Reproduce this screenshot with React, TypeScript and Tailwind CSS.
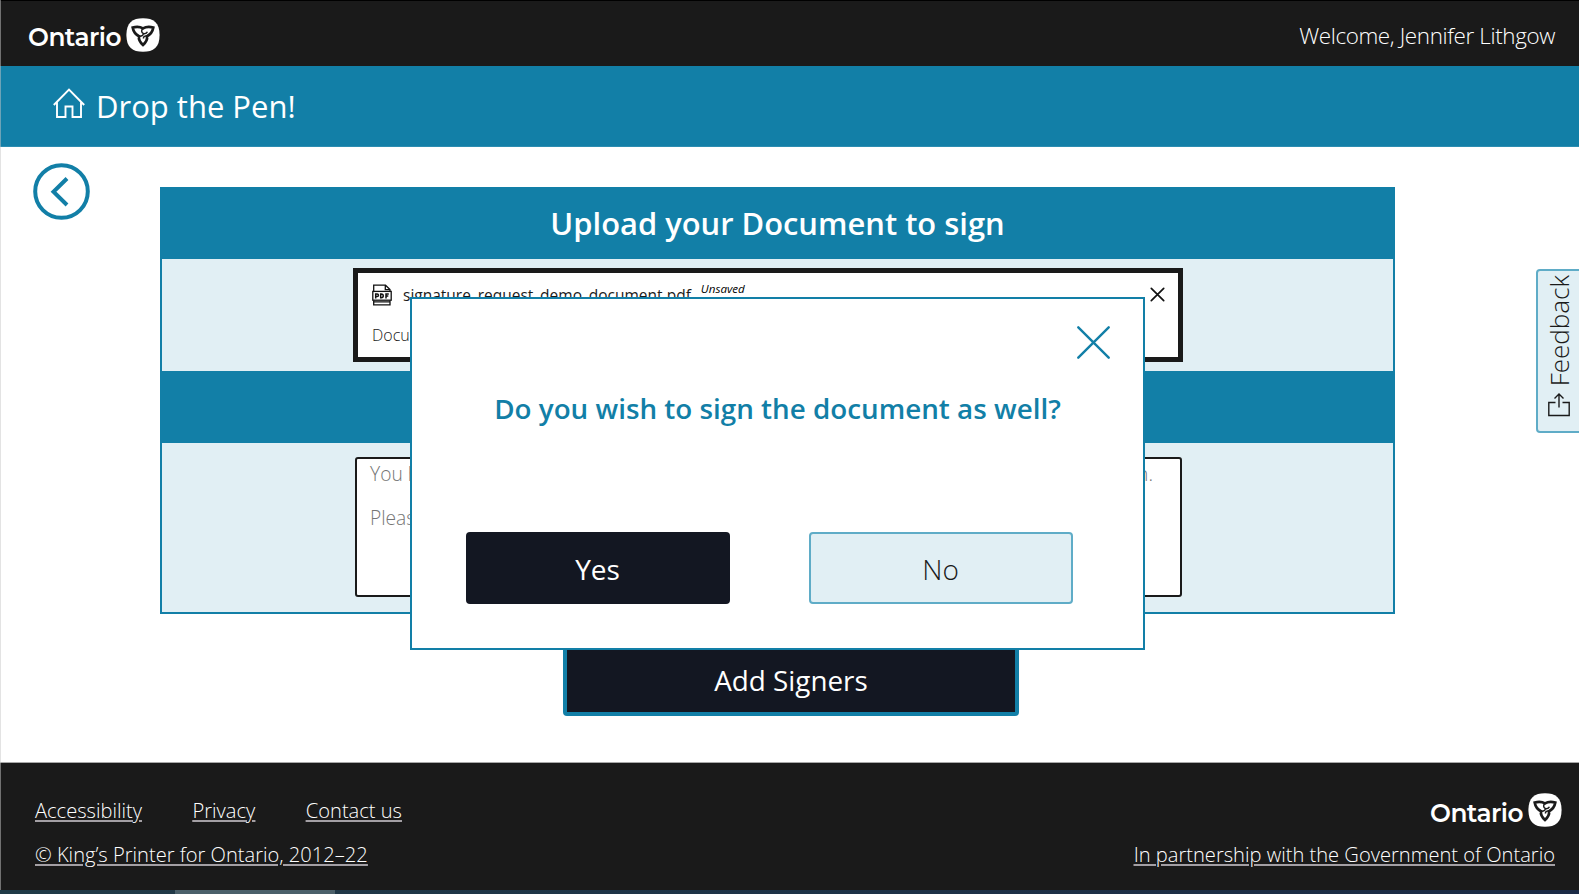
import React from 'react';

function Trillium() {
  return (
    <svg width="34" height="34" viewBox="0 0 34 34" className="-mt-[2px] shrink-0">
      <path fill="#fff" d="M17 0.2C27.500 0.2 33.600 4.500 33.600 17S27.500 33.800 17 33.800 0.400 29.500 0.400 17 6.500 0.200 17 0.200Z" />
      <path fill="none" stroke="#1a1a1a" strokeWidth="2.700" strokeLinejoin="miter" d="M17 27C13.800 24 12.400 21.400 13 18.200C9.800 16.600 7.400 13.600 6.700 9.500C10.500 8.500 14 8.600 17 10.400C20 8.600 23.500 8.500 27.300 9.500C26.600 13.600 24.200 16.600 21 18.200C21.600 21.400 20.200 24 17 27Z" />
      <path fill="none" stroke="#1a1a1a" strokeWidth="1.500" d="M17 10.400C15 12.200 15.300 14.600 17.400 15.600C19.400 16 20.800 15.200 21.400 13.800M13 18.200C15.800 18.600 17.200 17.400 17.400 15.600M21 18.200C19 17.600 17.400 18.600 17.400 20.500" />
    </svg>
  );
}

function OntarioLogo() {
  return (
    <div className="flex items-center gap-[6px]">
      <span className="w-[92px] whitespace-nowrap pt-[4px] font-['Montserrat','Lato','Open_Sans',sans-serif] text-[24.8px] font-semibold leading-none tracking-[-0.5px] text-white">Ontario</span>
      <Trillium />
    </div>
  );
}

function Cross({ size, color, width }: { size: number; color: string; width: number }) {
  return (
    <svg width={size} height={size} viewBox={`0 0 ${size} ${size}`} fill="none" stroke={color} strokeWidth={width} strokeLinecap="round">
      <path d={`M1.300 1.300L${size - 1.3} ${size - 1.3}M${size - 1.3} 1.300L1.300 ${size - 1.3}`} />
    </svg>
  );
}

function PdfIcon() {
  return (
    <svg width="20" height="22" viewBox="0 0 20 22" fill="none" stroke="#111" strokeWidth="1.300">
      <path d="M1.700 7.500V1.200H13.500L18 5.500V7.500M13.300 1.200V5.600H17.800M1.700 16.500V20.800H18V16.500M1.700 17.800H18" />
      <rect x="0.800" y="7.400" width="18.400" height="8.800" />
      <path strokeWidth="1.500" d="M3.700 14.500V9.900H5.200A1.200 1.200 0 0 1 5.200 12.400H3.700M8.700 9.900V13.800H9.300A1.950 1.950 0 0 0 9.300 9.900ZM14 14.500V9.900H16.800M14 12.100H16.300" />
    </svg>
  );
}

export default function App() {
  return (
    <div className="relative flex h-[894px] w-[1579px] flex-col overflow-hidden bg-white font-['Open_Sans',sans-serif] text-[#1a1a1a]">
      <header className="flex h-[66px] items-center justify-between border-t border-black bg-[#1a1a1a] pl-[28px] pr-[24px] pt-[4px]">
        <OntarioLogo />
        <span className="pt-px text-[22.4px] font-light tracking-[-0.36px] text-white">Welcome, Jennifer Lithgow</span>
      </header>

      <nav className="flex h-[81px] items-center border-b border-[#2c8db1] bg-[#127fa7] pl-[53px]">
        <svg width="32" height="31" viewBox="0 0 32 31" fill="none" stroke="#fff" strokeWidth="1.900" className="-mt-[5px]">
          <path d="M0.800 17L16 1.500L31.200 17M4 14.500V29H12.500V18.500H19.500V29H28V14.500" />
        </svg>
        <span className="ml-[11px] text-[31px] text-white">Drop the Pen!</span>
      </nav>

      <main className="flex h-[615px] items-start">
        <button className="ml-[33px] mt-[16px] shrink-0">
          <svg width="57" height="57" viewBox="0 0 57 57" fill="none" stroke="#127fa7" strokeWidth="4">
            <circle cx="28.500" cy="28.500" r="26.300" />
            <path d="M34 15.500L20.500 28.800L34 42" />
          </svg>
        </button>
        <div className="ml-[70px] mt-[40px] flex w-[1235px] shrink-0 flex-col items-center">
          <section className="w-full">
            <h1 className="flex h-[72px] items-center justify-center bg-[#127fa7] text-[30.9px] font-semibold text-white">Upload your Document to sign</h1>
            <div className="flex h-[112px] items-start border-x-2 border-[#127fa7] bg-[#e1eff4] pl-[191px] pt-[9px]">
              <div className="flex h-[94px] w-[830px] flex-col border-[5px] border-[#1a1a1a] bg-white px-[14px]">
                <div className="flex h-[43px] items-center">
                  <PdfIcon />
                  <span className="ml-[11px] pt-[3px] text-[15.5px]">signature_request_demo_document.pdf</span>
                  <span className="-mt-[11px] ml-[10px] text-[11.6px] italic text-black">Unsaved</span>
                  <span className="-mr-[1px] ml-auto"><Cross size={15} color="#111" width={1.7} /></span>
                </div>
                <p className="mt-[7px] text-[16px] font-light leading-6 text-[#1a1a1a]">Document</p>
              </div>
            </div>
          </section>
          <section className="w-full">
            <div className="h-[72px] bg-[#127fa7]" />
            <div className="flex h-[171px] items-start border-x-2 border-b-2 border-[#127fa7] bg-[#e1eff4] pl-[193px] pt-[14px]">
              <div className="h-[140px] w-[827px] rounded-[3px] border-2 border-[#1a1a1a] bg-white pl-[13px] text-[19.2px] font-light leading-[30px] text-[#757575]">
                <p className="flex w-[783px] justify-between whitespace-nowrap"><span>You have not added any signers</span><span>to sign.</span></p>
                <p className="mt-[14px]">Please add a signer.</p>
              </div>
            </div>
          </section>
          <button className="ml-[27px] mt-[32px] h-[70px] w-[456px] rounded-[4px] border-4 border-[#127fa7] bg-[#131722] text-[27.8px] text-white">Add Signers</button>
        </div>
      </main>

      <footer className="h-[128px] border-t border-[#a8a8a8] bg-[#1a1a1a] px-[35px] text-[20.1px] font-light text-white">
        <div className="flex h-[69px] items-end justify-between">
          <div className="flex gap-[50.5px] pb-[6px] leading-[30px] underline decoration-[#a39fa4] decoration-2 underline-offset-2">
            <a>Accessibility</a>
            <a>Privacy</a>
            <a>Contact us</a>
          </div>
          <div className="-mr-[18px] pb-[5px]"><OntarioLogo /></div>
        </div>
        <div className="-mr-[11px] mt-[8px] flex justify-between leading-[30px] underline decoration-[#a39fa4] decoration-2 underline-offset-2">
          <a>© King’s Printer for Ontario, 2012–22</a>
          <a>In partnership with the Government of Ontario</a>
        </div>
      </footer>
      <div className="h-[4px] bg-linear-to-r from-[#203a47] to-[#1b2a45] pl-[175px]">
        <div className="h-full w-[160px] bg-[#4b606a]" />
      </div>

      <div className="absolute left-[410px] top-[297px] flex h-[353px] w-[735px] flex-col border-2 border-[#127fa7] bg-white">
        <button className="ml-auto mr-[33px] mt-[27px]"><Cross size={33} color="#127fa7" width={2.4} /></button>
        <p className="mt-[28px] text-center text-[27.8px] font-semibold leading-[42px] text-[#127fa7]">Do you wish to sign the document as well?</p>
        <div className="mt-[103px] flex gap-[79px] pl-[53.5px] text-[28px]">
          <button className="h-[72px] w-[264px] rounded-[4px] bg-[#131722] pt-[2px] text-white">Yes</button>
          <button className="h-[72px] w-[264px] rounded-[4px] border-2 border-[#5facc7] bg-[#e1eff4] pt-[2px] font-light">No</button>
        </div>
      </div>

      <div className="absolute left-[1536px] top-[269px] flex h-[164px] w-[46px] flex-col items-center rounded-l-[4px] border-2 border-[#5facc7] bg-[#e1eff4]">
        <span className="mt-[4px] rotate-180 text-[26px] font-light leading-[40px] [writing-mode:vertical-rl]">Feedback</span>
        <svg width="22" height="24" viewBox="0 0 22 24" fill="none" stroke="#1a1a1a" strokeWidth="1.400" className="mt-[7px]">
          <path d="M7.500 9.500H0.800V22.500H21.200V9.500H14.500M11 14.500V1M6.500 5.500L11 1L15.500 5.500" />
        </svg>
      </div>
      <div className="absolute left-0 top-0 h-[890px] w-px bg-[#c8c8c8]/50" />
    </div>
  );
}
